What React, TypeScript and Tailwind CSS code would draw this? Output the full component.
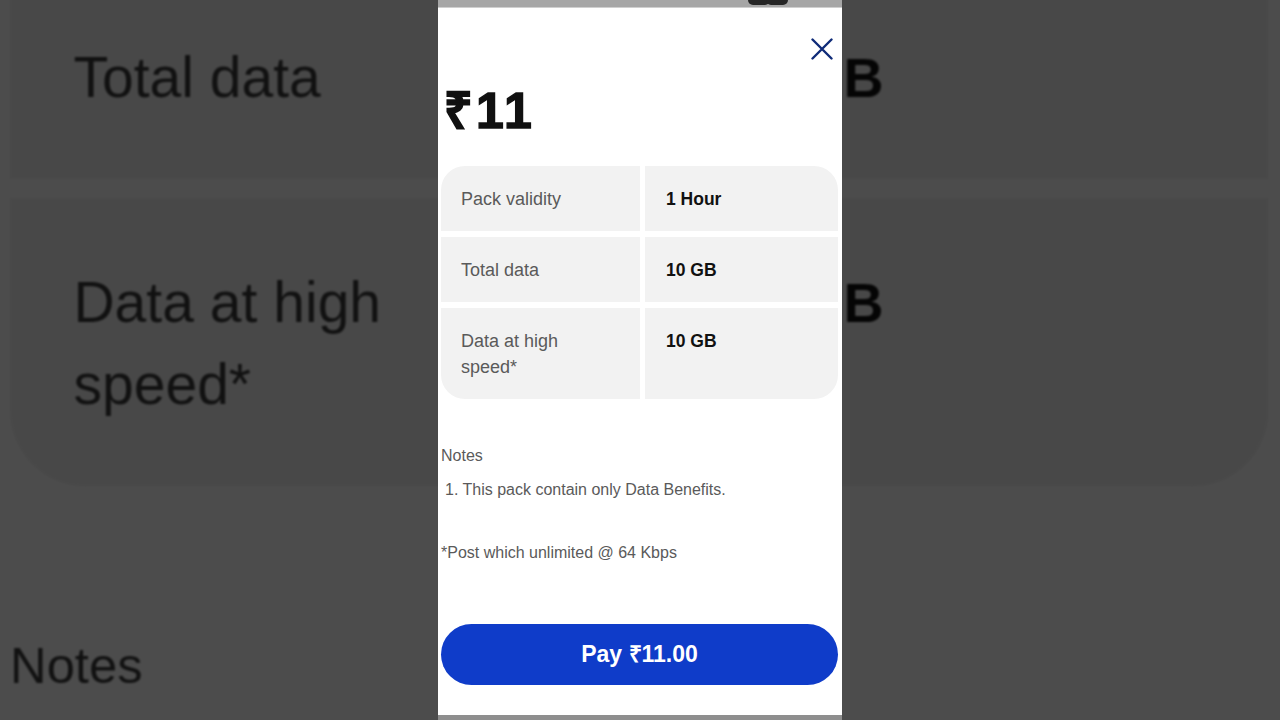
import React from "react";

const rows = [
  { label: "Pack validity", value: "1 Hour" },
  { label: "Total data", value: "10 GB" },
  { label: "Data at high speed*", value: "10 GB", wrap: true },
];

const PackDetails = ({ backdrop = false }: { backdrop?: boolean }) => {
  const shown = backdrop ? rows.slice(1) : rows;
  return (
    <div className="w-[397px]">
      {/* Benefits table */}
      <div
        className={
          backdrop
            ? "grid grid-cols-[199px_1fr] gap-x-[5px] gap-y-[6px] rounded-b-[24px] overflow-hidden"
            : "grid grid-cols-[199px_1fr] gap-x-[5px] gap-y-[6px] rounded-[24px] overflow-hidden"
        }
      >
        {shown.map((row) => (
          <React.Fragment key={row.label}>
            <div
              className={
                backdrop
                  ? "bg-[#f2f2f2] pl-[20px] pr-[40px] pt-[20px] pb-[19px] text-[18px] leading-[26px] text-[#3a3a3a]"
                  : "bg-[#f2f2f2] pl-[20px] pr-[40px] pt-[20px] pb-[19px] text-[18px] leading-[26px] text-[#5a5a5a]"
              }
            >
              {row.wrap ? (
                <>
                  Data at high
                  <br />
                  speed*
                </>
              ) : (
                row.label
              )}
            </div>
            <div className="bg-[#f2f2f2] pl-[21px] pt-[20px] pb-[19px] text-[17.5px] leading-[26px] font-bold text-[#111]">
              {row.value}
            </div>
          </React.Fragment>
        ))}
      </div>

      {/* Notes */}
      <div
        className={
          backdrop
            ? "mt-[46px] text-[16px] leading-[22px] text-[#3a3a3a]"
            : "mt-[46px] text-[16px] leading-[22px] text-[#5a5a5a]"
        }
      >
        <p>Notes</p>
        {!backdrop && (
          <>
            <p className="mt-[12px] pl-[4px]">1. This pack contain only Data Benefits.</p>
            <p className="mt-[41px]">*Post which unlimited @ 64 Kbps</p>
          </>
        )}
      </div>
    </div>
  );
};

export default function App() {
  return (
    <div
      className="relative w-[1280px] h-[720px] overflow-hidden bg-white"
      style={{ fontFamily: '"Liberation Sans", Arial, sans-serif' }}
    >
      {/* Blurred, dimmed backdrop */}
      <div className="absolute inset-0 overflow-hidden">
        <div className="absolute left-[10px] top-[-27px] origin-top-left scale-[3.17] blur-[0.4px]">
          <PackDetails backdrop />
        </div>
        <div className="absolute inset-0 bg-black/70" />
      </div>

      {/* Sheet */}
      <div className="relative flex justify-center h-full">
        <div className="w-[404px] h-full flex flex-col">
          <div className="h-[8px] bg-[#a6a6a6] border-b border-[#cfcfcf] pl-[310px] flex">
            <div className="w-[22px] h-[5px] rounded-b-full bg-[#262626]" />
            <div className="w-[22px] h-[5px] -ml-[4px] rounded-b-full bg-[#262626]" />
          </div>

          <div className="flex-1 bg-white px-[3px] flex flex-col">
            <div className="flex justify-end pt-[30px] pr-[6px]">
              <svg width="22" height="22" viewBox="0 0 22 22" fill="none">
                <path d="M1.5 1.5 L20.5 20.5 M20.5 1.5 L1.5 20.5" stroke="#0f2b78" strokeWidth="2.4" strokeLinecap="round" />
              </svg>
            </div>

            <div className="mt-[25px] pl-[3px] text-[50px] leading-[52px] font-black tracking-[3px] text-[#111] [-webkit-text-stroke:1.4px_#111]">
              ₹11
            </div>

            <div className="mt-[29px]">
              <PackDetails />
            </div>

            <button className="mt-[60px] h-[61px] w-[397px] rounded-full bg-[#0f3cc9] text-white text-[23px] font-bold">
              Pay ₹11.00
            </button>
          </div>

          <div className="h-[5px] bg-[#8e8e8e]" />
        </div>
      </div>
    </div>
  );
}
